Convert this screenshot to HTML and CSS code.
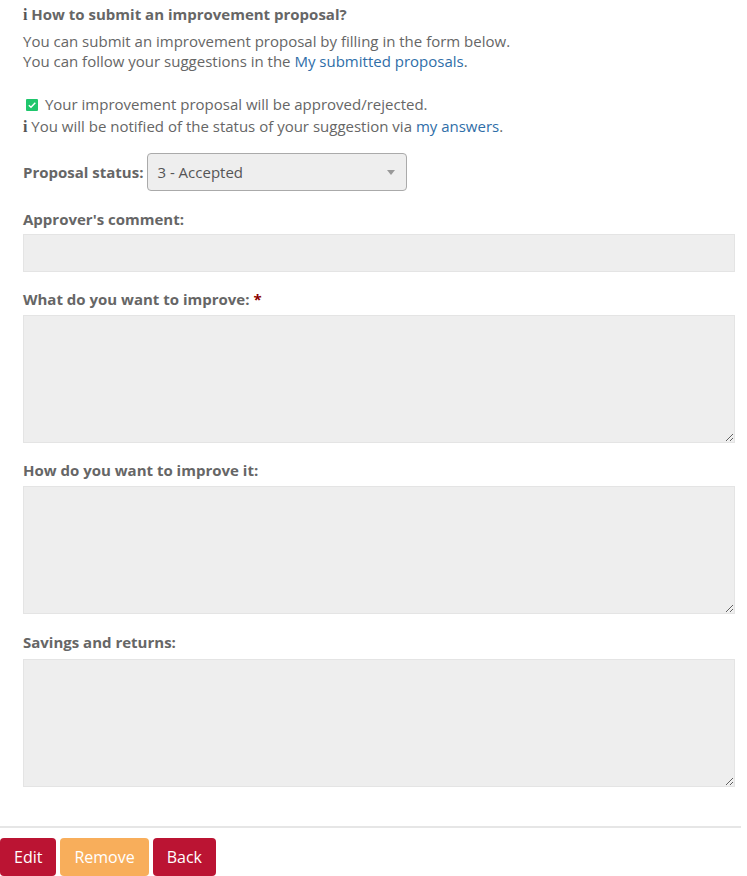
FILE: index.html
```html
<!DOCTYPE html>
<html>
<head>
<meta charset="utf-8">
<link rel="stylesheet" href="styles.css">
</head>
<body>
<div class="page">
  <div class="content">
    <h4 class="title"><span class="info">i</span> How to submit an improvement proposal?</h4>
    <p class="para">You can submit an improvement proposal by filling in the form below.<br>You can follow your suggestions in the <a href="#" class="link">My submitted proposals</a>.</p>
    <p class="para notes">
      <span class="line"><span class="check"><svg width="12" height="12" viewBox="0 0 12 12"><rect width="12" height="12" rx="1" fill="#1fc66c"/><path d="M2.8 6.2 L5 8.3 L9.3 3.8" fill="none" stroke="#fff" stroke-width="1.4"/></svg></span> Your improvement proposal will be approved/rejected.</span>
      <span class="line"><span class="info">i</span> You will be notified of the status of your suggestion via <a href="#" class="link">my answers</a>.</span>
    </p>

    <div class="status-row">
      <label class="label">Proposal status:</label>
      <div class="select"><span>3 - Accepted</span><span class="caret"></span></div>
    </div>

    <div class="field first">
      <label class="label">Approver's comment:</label>
      <div class="input"></div>
    </div>

    <div class="field">
      <label class="label">What do you want to improve: <span class="req">*</span></label>
      <textarea class="area"></textarea>
    </div>

    <div class="field third">
      <label class="label">How do you want to improve it:</label>
      <textarea class="area"></textarea>
    </div>

    <div class="field last">
      <label class="label">Savings and returns:</label>
      <textarea class="area"></textarea>
    </div>
  </div>
  <div class="footer">
    <button class="btn btn-red">Edit</button>
    <button class="btn btn-orange">Remove</button>
    <button class="btn btn-red">Back</button>
  </div>
</div>
</body>
</html>
```

FILE: styles.css
```css
html, body {
  margin: 0;
  padding: 0;
  background: #fff;
}
body {
  font-family: "Open Sans", "Liberation Sans", sans-serif;
  font-size: 15px;
  line-height: 20px;
  color: #666;
}
.page {
  width: 741px;
}
.content {
  padding: 4px 6px 0 23px;
}
.title {
  margin: 0 0 6px 0;
  font-size: 15px;
  font-weight: 700;
  line-height: 20px;
  color: #666;
}
.info {
  font-family: "Liberation Serif", "DejaVu Serif", serif;
  font-weight: 700;
  font-size: 16px;
  color: #555;
}
.para {
  margin: 0 0 23px 0;
}
.notes {
  margin-bottom: 17px;
}
.line {
  display: block;
  height: 22px;
}
.line + .line {
  height: 20px;
}
.check {
  display: inline-block;
  width: 12px;
  height: 12px;
  margin-left: 3px;
  margin-right: 3px;
  vertical-align: -1px;
}
.check svg { display: block; }
.link {
  color: #2f6ea8;
  text-decoration: none;
}
.label {
  font-weight: 700;
  color: #666;
  display: block;
}
.status-row {
  display: flex;
  align-items: center;
  gap: 4px;
  margin-bottom: 18px;
}
.status-row .label {
  display: inline;
}
.select {
  box-sizing: border-box;
  width: 260px;
  height: 38px;
  border: 1px solid #aaa;
  border-radius: 4px;
  background: #eee;
  display: flex;
  align-items: center;
  justify-content: space-between;
  padding: 0 10px 0 9px;
  color: #555;
}
.caret {
  width: 0;
  height: 0;
  border-left: 4px solid transparent;
  border-right: 4px solid transparent;
  border-top: 5px solid #999;
  margin-right: 1px;
}
.field {
  display: flex;
  flex-direction: column;
  gap: 6px;
  margin-bottom: 17px;
}
.field.first {
  gap: 5px;
}
.field.third {
  margin-bottom: 18px;
}
.field.last {
  gap: 7px;
  margin-bottom: 0;
}
.input {
  box-sizing: border-box;
  height: 38px;
  border: 1px solid #e4e4e4;
  background: #eee;
}
.area {
  box-sizing: border-box;
  height: 128px;
  width: 100%;
  border: 1px solid #e4e4e4;
  background: #eee;
  margin: 0;
  padding: 6px;
  font: inherit;
  resize: vertical;
  border-radius: 0;
}
.req {
  color: #8b0000;
}
.footer {
  margin-top: 39px;
  border-top: 2px solid #e6e6e6;
  padding-top: 10px;
  display: flex;
  gap: 4px;
}
.btn {
  font-family: "Open Sans", "Liberation Sans", sans-serif;
  font-size: 16px;
  height: 38px;
  border: none;
  border-radius: 4px;
  color: #fff;
  padding: 0 14px;
  cursor: pointer;
}
.btn-red {
  background: #bb1433;
}
.btn-orange {
  background: #f8ae5b;
}
```
